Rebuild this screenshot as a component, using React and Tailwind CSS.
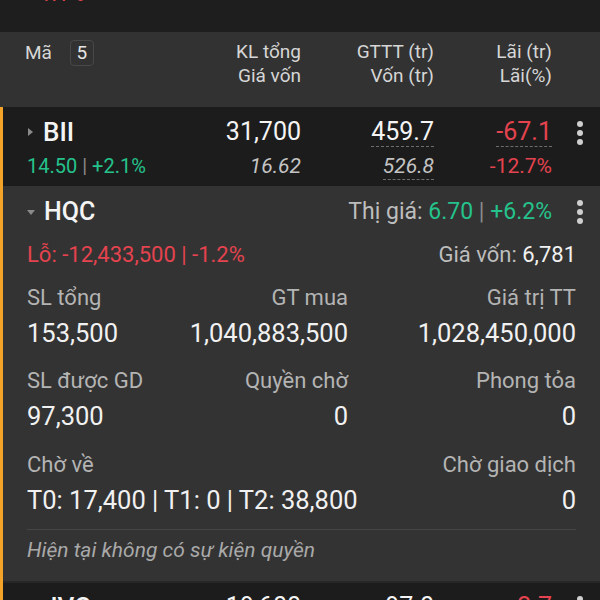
const green = 'text-[#25c28c]';
const red = 'text-[#e4434f]';

const Dots = () => (
  <div className="w-[48px] flex justify-center">
    <div className="flex flex-col gap-[3px] pl-[8px]">
      <span className="w-[6px] h-[6px] rounded-full bg-[#cfcfcf]" />
      <span className="w-[6px] h-[6px] rounded-full bg-[#cfcfcf]" />
      <span className="w-[6px] h-[6px] rounded-full bg-[#cfcfcf]" />
    </div>
  </div>
);

const Stat = ({ label, value, align = 'left', className = '' }) => (
  <div className={`${align === 'right' ? 'text-right' : 'text-left'} ${className}`}>
    <div className="text-[22px] leading-[26px] text-[#b4b4b4]">{label}</div>
    <div className="mt-[6px] text-[25.5px] leading-[32px] text-[#f1f1f1] whitespace-nowrap">{value}</div>
  </div>
);

export default function App() {
  return (
    <div className="w-[600px] min-h-screen bg-[#1e1e1e] font-['Roboto',sans-serif]">
      {/* phần trên bị cắt */}
      <div className="h-[32px] overflow-hidden pl-[34px]">
        <div className={`-mt-[18px] text-[21px] leading-[24px] ${red}`}>-1.1%</div>
      </div>

      {/* tiêu đề bảng */}
      <div className="h-[75px] bg-[#323232] flex items-start pt-[8px] text-[19px] leading-[24px] text-[#d6d6d6]">
        <div className="flex-1 flex items-center pl-[25px]">
          <span>Mã</span>
          <span className="ml-[18px] w-[24px] h-[26px] flex items-center justify-center rounded-[4px] border border-[#484848] text-[#e6e6e6]">
            5
          </span>
        </div>
        <div className="w-[120px] text-right">
          <div>KL tổng</div>
          <div>Giá vốn</div>
        </div>
        <div className="w-[133px] text-right">
          <div>GTTT (tr)</div>
          <div>Vốn (tr)</div>
        </div>
        <div className="w-[118px] text-right">
          <div>Lãi (tr)</div>
          <div>Lãi(%)</div>
        </div>
        <div className="w-[48px]" />
      </div>

      <div className="border-l-[3px] border-[#f3a328]">
        {/* BII */}
        <div className="h-[79px] bg-[#1c1c1c] flex pt-[10px]">
          <div className="flex-1 pl-6">
            <div className="h-[30px] flex items-center">
              <span className="w-0 h-0 border-y-[4px] border-y-transparent border-l-[5px] border-l-[#8a8a8a] ml-[1px]" />
              <span className="ml-[10px] text-[26px] leading-[30px] font-medium text-[#f4f4f4]">BII</span>
            </div>
            <div className={`mt-[6px] text-[20px] leading-[26px] ${green}`}>
              14.50 <span className="text-[#8a8a8a]">|</span> +2.1%
            </div>
          </div>
          <div className="w-[120px] text-right">
            <div className="h-[30px] text-[25px] leading-[30px] text-[#f4f4f4]">31,700</div>
            <div className="mt-[6px] text-[21px] leading-[26px] italic text-[#c4c4c4]">16.62</div>
          </div>
          <div className="w-[133px] text-right">
            <div className="h-[30px]">
              <span className="inline-block text-[25px] leading-[29px] text-[#f4f4f4] border-b border-dashed border-[#6e6e6e]">459.7</span>
            </div>
            <div className="mt-[6px]">
              <span className="inline-block text-[21px] leading-[26px] italic text-[#c4c4c4] border-b border-dashed border-[#6e6e6e]">526.8</span>
            </div>
          </div>
          <div className="w-[118px] text-right">
            <div className="h-[30px]">
              <span className={`inline-block text-[25px] leading-[29px] border-b border-dashed border-[#6e6e6e] ${red}`}>-67.1</span>
            </div>
            <div className={`mt-[6px] text-[21px] leading-[26px] ${red}`}>-12.7%</div>
          </div>
          <div className="pt-[4px]">
            <Dots />
          </div>
        </div>

        {/* HQC mở rộng */}
        <div className="bg-[#333333] pt-[11px] pb-[18px]">
          <div className="flex items-center h-[30px]">
            <div className="flex-1 pl-6 flex items-center">
              <span className="w-0 h-0 border-x-[4px] border-x-transparent border-t-[5px] border-t-[#8a8a8a]" />
              <span className="ml-[9px] text-[25px] leading-[30px] font-medium text-[#f4f4f4]">HQC</span>
            </div>
            <div className="text-[23px] leading-[30px] text-[#bdbdbd]">
              Thị giá: <span className={green}>6.70</span> <span className="text-[#8a8a8a]">|</span>{' '}
              <span className={green}>+6.2%</span>
            </div>
            <Dots />
          </div>

          <div className="px-6">
            <div className="mt-[14px] flex justify-between text-[22px] leading-[28px]">
              <span className={red}>Lỗ: -12,433,500 | -1.2%</span>
              <span className="text-[#bdbdbd]">
                Giá vốn: <span className="text-[#f1f1f1]">6,781</span>
              </span>
            </div>

            <div className="mt-[16px] flex">
              <Stat label="SL tổng" value="153,500" className="w-[130px]" />
              <Stat label="GT mua" value="1,040,883,500" align="right" className="w-[191px]" />
              <Stat label="Giá trị TT" value="1,028,450,000" align="right" className="flex-1" />
            </div>

            <div className="mt-[19px] flex">
              <Stat label="SL được GD" value="97,300" className="w-[130px]" />
              <Stat label="Quyền chờ" value="0" align="right" className="w-[191px]" />
              <Stat label="Phong tỏa" value="0" align="right" className="flex-1" />
            </div>

            <div className="mt-[20px] flex justify-between">
              <Stat label="Chờ về" value="T0: 17,400 | T1: 0 | T2: 38,800" />
              <Stat label="Chờ giao dịch" value="0" align="right" />
            </div>

            <div className="mt-[13px] h-px bg-[#464646]" />

            <div className="mt-[7px] text-[21px] leading-[26px] italic text-[#a9a9a9]">
              Hiện tại không có sự kiện quyền
            </div>
          </div>
        </div>

        {/* JVC */}
        <div className="h-[76px] bg-[#1c1c1c] border-t-2 border-[#262626] flex pt-[9px]">
          <div className="flex-1 pl-6">
            <div className="h-[30px] flex items-center">
              <span className="w-0 h-0 border-y-[4px] border-y-transparent border-l-[5px] border-l-[#8a8a8a] ml-[1px]" />
              <span className="ml-[10px] text-[26px] leading-[30px] font-medium text-[#f4f4f4]">JVC</span>
            </div>
          </div>
          <div className="w-[120px] text-right text-[25px] leading-[30px] text-[#f4f4f4]">19,600</div>
          <div className="w-[133px] text-right text-[25px] leading-[30px] text-[#f4f4f4]">97.0</div>
          <div className={`w-[118px] text-right text-[25px] leading-[30px] ${red}`}>-2.7</div>
          <div className="pt-[4px]">
            <Dots />
          </div>
        </div>
      </div>
    </div>
  );
}
